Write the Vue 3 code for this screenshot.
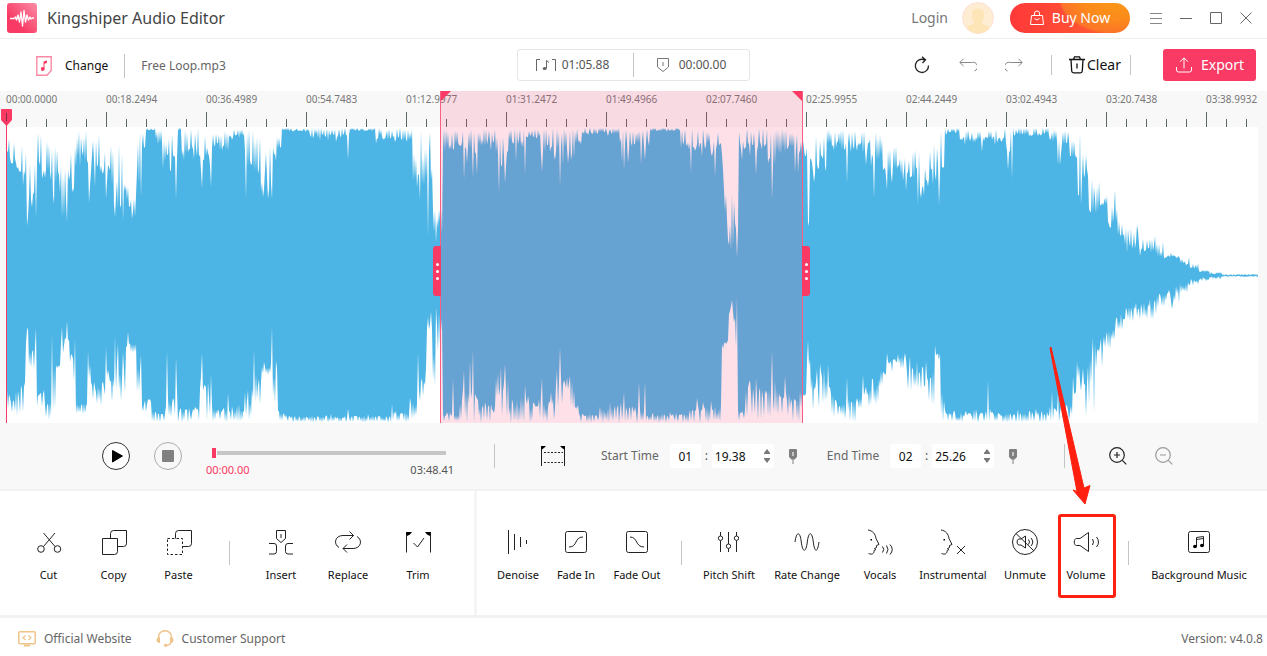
<script setup>
import { ref } from 'vue'

const SPAN = 1252
const HALF_TOP = 127
const pct = (px) => (px / SPAN) * 100 + '%'

const labels = [
  '00:00.0000', '00:18.2494', '00:36.4989', '00:54.7483', '01:12.9977', '01:31.2472', '01:49.4966',
  '02:07.7460', '02:25.9955', '02:44.2449', '03:02.4943', '03:20.7438', '03:38.9932',
]
const ticks = Array.from({ length: 63 }, (_, i) => ({ at: pct(i * 20), major: i % 5 === 0 }))
const selection = { left: pct(434), width: pct(363) }

// Loudness bands: [start, outer edge, inner edge]
const upperBands = [
  [6, 133, 165], [12, 138, 170], [18, 142, 184], [26, 155, 212], [37, 134, 175], [45, 140, 170], [52, 150, 196],
  [56, 148, 184], [61, 168, 208], [68, 148, 186], [76, 132, 166], [90, 134, 172], [100, 152, 174], [108, 145, 180],
  [114, 175, 208], [119, 145, 206], [126, 186, 210], [132, 196, 216], [137, 140, 182], [140, 130, 152], [146, 128, 131],
  [156, 130, 144], [163, 140, 162], [172, 130, 158], [178, 128, 130], [182, 130, 155], [198, 130, 160], [212, 132, 150],
  [230, 130, 138], [244, 130, 165], [254, 132, 178], [266, 145, 188], [274, 138, 165], [278, 138, 148], [282, 128, 131],
  [310, 128, 138], [350, 128, 131], [376, 128, 140], [404, 130, 144], [413, 155, 188], [425, 150, 180], [432, 170, 224],
  [438, 205, 232], [443, 130, 150], [460, 130, 152], [480, 130, 145], [495, 132, 165], [510, 130, 145], [525, 130, 138],
  [540, 130, 155], [575, 130, 145], [583, 128, 134], [620, 130, 145], [650, 128, 131], [680, 130, 150], [722, 150, 180],
  [724, 190, 218], [728, 196, 242], [736, 215, 240], [739, 129, 150], [767, 130, 165], [776, 130, 155], [800, 140, 156],
  [806, 130, 150], [808, 180, 220], [810, 130, 180], [815, 134, 172], [827, 130, 150], [845, 130, 152], [870, 135, 168],
  [886, 146, 175], [900, 158, 175], [910, 150, 178], [920, 165, 188], [930, 145, 180], [940, 135, 175], [945, 128, 133],
  [960, 130, 142], [1005, 130, 152], [1014, 128, 136], [1050, 130, 142], [1058, 135, 165], [1062, 132, 145],
  [1070, 140, 160], [1077, 160, 200], [1082, 156, 178], [1089, 182, 212], [1100, 196, 206], [1108, 208, 226],
  [1118, 222, 236], [1125, 229, 246], [1132, 230, 248], [1140, 240, 252], [1154, 244, 256], [1165, 252, 258],
  [1180, 258, 264], [1190, 264, 269], [1200, 270, 272], [1210, 272, 274], [1222, 274, 275],
]
const upperNotches = [
  [28, 216], [32, 207], [36, 218], [54, 204], [62, 218], [67, 222], [89, 203], [106, 199], [115, 217], [118, 208],
  [123, 221], [132, 219], [141, 198], [176, 199], [202, 188], [211, 187], [246, 199], [263, 197], [268, 199],
  [272, 199], [348, 160], [421, 130], [428, 237], [430, 132], [436, 243], [442, 235], [464, 180], [467, 163],
  [473, 178], [477, 175], [499, 193], [505, 183], [516, 162], [525, 175], [542, 172], [555, 160], [560, 187],
  [563, 165], [571, 160], [622, 162], [624, 170], [628, 163], [641, 165], [645, 160], [691, 174], [712, 156],
  [715, 177], [727, 220], [729, 245], [733, 247], [737, 258], [742, 160], [756, 175], [770, 158], [772, 200],
  [795, 173], [798, 173], [808, 226], [847, 183], [866, 165], [874, 198], [887, 190], [906, 191], [918, 205],
  [921, 198], [939, 205], [982, 152], [1008, 170], [1012, 179], [1060, 165], [1078, 196], [1080, 132], [1081, 205],
  [1096, 213], [1110, 228], [1115, 190], [1137, 225], [1155, 236], [1163, 242],
]
const lowerBands = [
  [6, 408, 388], [10, 411, 398], [16, 418, 392], [20, 418, 385], [26, 344, 328], [29, 370, 346], [37, 406, 390],
  [45, 418, 400], [52, 408, 365], [60, 370, 342], [66, 350, 338], [70, 385, 350], [76, 415, 402], [88, 382, 352],
  [92, 402, 385], [100, 412, 382], [106, 402, 370], [114, 390, 345], [120, 400, 362], [126, 352, 344],
  [137, 390, 365], [142, 412, 400], [152, 422, 412], [166, 420, 395], [178, 422, 408], [200, 418, 385],
  [212, 422, 408], [230, 422, 405], [245, 420, 390], [252, 402, 378], [262, 375, 362], [272, 402, 365],
  [278, 420, 412], [285, 422, 416], [390, 422, 411], [410, 420, 395], [420, 400, 375], [426, 370, 325],
  [432, 385, 335], [438, 350, 320], [443, 422, 412], [460, 422, 390], [480, 422, 406], [496, 418, 380],
  [510, 422, 398], [530, 422, 400], [556, 406, 378], [575, 415, 405], [580, 422, 414], [600, 422, 406],
  [646, 422, 414], [690, 422, 406], [722, 350, 342], [728, 345, 308], [738, 420, 410], [746, 418, 388],
  [772, 416, 390], [790, 420, 400], [800, 408, 390], [806, 400, 350], [812, 410, 376], [820, 406, 370],
  [828, 412, 388], [834, 416, 404], [845, 422, 402], [862, 412, 385], [870, 405, 380], [880, 385, 370],
  [886, 374, 358], [900, 368, 355], [907, 390, 365], [918, 388, 366], [925, 404, 372], [935, 360, 354],
  [941, 420, 390], [945, 422, 413], [990, 422, 412], [1050, 422, 406], [1072, 420, 378], [1082, 412, 370],
  [1090, 384, 348], [1096, 368, 342], [1104, 348, 335], [1115, 330, 318], [1125, 320, 307], [1135, 318, 303],
  [1150, 318, 298], [1157, 306, 294], [1165, 302, 290], [1180, 292, 284], [1190, 285, 280], [1200, 281, 278],
  [1210, 279, 277], [1222, 277, 276],
]
const lowerNotches = [
  [27, 330], [36, 328], [52, 334], [62, 327], [67, 321], [88, 351], [106, 347], [115, 336], [123, 352], [128, 332],
  [141, 355], [167, 351], [176, 357], [202, 353], [211, 374], [228, 393], [254, 349], [272, 327], [276, 361],
  [348, 409], [392, 404], [418, 353], [428, 317], [436, 307], [442, 318], [453, 378], [464, 370], [470, 360],
  [473, 349], [498, 373], [505, 364], [525, 385], [542, 378], [556, 385], [560, 347], [564, 380], [624, 392],
  [639, 382], [645, 382], [697, 398], [725, 342], [732, 300], [737, 296], [750, 380], [756, 378], [772, 350],
  [785, 376], [808, 340], [820, 364], [828, 364], [847, 377], [887, 353], [905, 353], [935, 345], [988, 380],
  [1052, 391], [1058, 392], [1077, 361], [1083, 368], [1093, 338], [1094, 414], [1102, 367], [1172, 309],
]

function random(seed) {
  let s = seed
  return () => {
    s = (s * 1664525 + 1013904223) % 4294967296
    return s / 4294967296
  }
}

function trace(bands, notches, seed) {
  const rnd = random(seed)
  const ys = []
  let b = 0
  let sincePeak = 0
  for (let x = 6; x <= 1258; x++) {
    while (b + 1 < bands.length && bands[b + 1][0] <= x) b++
    const [, outer, inner] = bands[b]
    const peak = sincePeak > 0 && rnd() < 0.45
    sincePeak = peak ? 0 : sincePeak + 1
    const deep = rnd() < 0.12 ? 0.35 : 0
    const r = peak ? rnd() * 0.3 - 0.1 : 0.55 + rnd() * 0.5 + deep
    const y = outer + (inner - outer) * r
    ys.push(Math.min(423, Math.max(128, y)))
  }
  for (const [x, y] of notches) ys[x - 6] = y
  return ys.map((y, i) => `${i} ${(y - HALF_TOP).toFixed(1)}`)
}

const wavePath =
  'M' + trace(upperBands, upperNotches, 7).join('L') +
  'L' + trace(lowerBands, lowerNotches, 29).reverse().join('L') + 'Z'

const face = 'M2 2C6.500 2.500 9.500 6 10 10.500L13 16.500L10.500 17.500V19.500L8.500 20.500L10 21.500L8 22.500C8.500 25.500 6 27 2.500 25.500'
const eye = 'M4.500 11h1.500v1.500h-1.500z'

const editTools = [
  { name: 'Cut', lines: ['M8.500 5L20 18.500M20 5L8.500 18.500', 'M9.300 21a3.300 3.300 0 1 1-6.600 0a3.300 3.300 0 1 1 6.600 0M25.800 21a3.300 3.300 0 1 1-6.600 0a3.300 3.300 0 1 1 6.600 0'] },
  { name: 'Copy', lines: ['M2.500 10.500H17.500V23.500a3 3 0 0 1-3 3H2.500Z', 'M10.500 10.500V5.500a3 3 0 0 1 3-3H26.500V15.500a3 3 0 0 1-3 3H17.500'] },
  { name: 'Paste', dashed: ['M2.500 10.500H17.500V26.500H2.500Z'], lines: ['M10.500 10.500V5.500a3 3 0 0 1 3-3H26.500V15.500a3 3 0 0 1-3 3H17.500'] },
  { divider: true, name: 'edit-divider' },
  { name: 'Insert', lines: ['M9.500 2.500H18.500V10.500L14 14.500L9.500 10.500Z', 'M14 6v4', 'M2 15.500H7a2.500 2.500 0 0 1 2.500 2.500V23.500a2.500 2.500 0 0 1-2.500 2.500H2M26 15.500H21a2.500 2.500 0 0 0-2.500 2.500V23.500a2.500 2.500 0 0 0 2.500 2.500H26'] },
  { name: 'Replace', lines: ['M5 19.500C-1 16 1 7.500 9 7.500H19.500', 'M15.500 3.500L19.500 7.500L15.500 11.500', 'M23 8.500C29 12 27 20.500 19 20.500H9', 'M13 16.500L9 20.500L13 24.500'] },
  { name: 'Trim', lines: ['M2.500 24.500V4.500M26.500 24.500V4.500', 'M9.500 15L13.500 19L20 10'], solid: ['M2 4H8L6 6.500L3 8ZM27 4H21L23 6.500L26 8Z'] },
]

const effectTools = [
  { name: 'Denoise', lines: ['M4.500 2V26M10.500 6V22M16.500 9V19M22.500 12V16'] },
  { name: 'Fade In', lines: ['M5.500 3.500H22.500a2 2 0 0 1 2 2V22.500a2 2 0 0 1-2 2H5.500a2 2 0 0 1-2-2V5.500a2 2 0 0 1 2-2Z', 'M7 19C16 19 12 9 21 9'] },
  { name: 'Fade Out', lines: ['M5.500 3.500H22.500a2 2 0 0 1 2 2V22.500a2 2 0 0 1-2 2H5.500a2 2 0 0 1-2-2V5.500a2 2 0 0 1 2-2Z', 'M7 9C15 9 12 19 21 19'] },
  { divider: true, name: 'effect-divider' },
  { name: 'Pitch Shift', lines: ['M5.500 4V8M5.500 12.500V24M13.500 4V16M13.500 20.500V24M21.500 4V8M21.500 12.500V24', 'M7.700 10.200a2.200 2.200 0 1 1-4.400 0a2.200 2.200 0 1 1 4.400 0M15.700 18.200a2.200 2.200 0 1 1-4.400 0a2.200 2.200 0 1 1 4.400 0M23.700 10.200a2.200 2.200 0 1 1-4.400 0a2.200 2.200 0 1 1 4.400 0'] },
  { name: 'Rate Change', lines: ['M2 14C3.500 3 7 3 8.300 14S13 25 14.300 14S19 3 20.300 14S24.500 25 26 14'] },
  { name: 'Vocals', lines: [face, 'M16.500 18.500Q19 21.500 16.500 24.500M20.500 17.500Q23.500 21.500 20.500 25.500M24 16.500Q28.500 21.500 24 26.500'], solid: [eye] },
  { name: 'Instrumental', lines: [face, 'M18 18L26 26M26 18L18 26'], solid: [eye] },
  { name: 'Unmute', lines: ['M26.500 14a12.500 12.500 0 1 1-25 0a12.500 12.500 0 1 1 25 0M5 5.500L23 23', 'M14.500 8V20L10 17H8C5.500 17 5.500 11 8 11H10Z', 'M17.500 11.500Q19.500 14 17.500 16.500M20 10Q23.500 14 20 18'] },
  { name: 'Volume', marked: true, lines: ['M16.500 4.500V23.500L8 17.500H4.500C1.500 17.500 1.500 10.500 4.500 10.500H8Z', 'M20.500 11Q22.500 14 20.500 17M24.500 9Q28.500 14 24.500 19'] },
  { divider: true, name: 'music-divider' },
  { name: 'Background Music', lines: ['M5.500 3.500H22.500a2 2 0 0 1 2 2V22.500a2 2 0 0 1-2 2H5.500a2 2 0 0 1-2-2V5.500a2 2 0 0 1 2-2Z', 'M11.500 18.500V9.500L18.500 8.500V17.500M11.500 11.500L18.500 10.500'], solid: ['M12 18.500a2 1.700 0 1 1-4 0a2 1.700 0 1 1 4 0M19 17.500a2 1.700 0 1 1-4 0a2 1.700 0 1 1 4 0'] },
]
const toolGroups = [
  { id: 'edit', tools: editTools },
  { id: 'effects', tools: effectTools },
]

const ranges = ref([
  { id: 'start', label: 'Start Time', min: '01', sec: '19.38' },
  { id: 'end', label: 'End Time', min: '02', sec: '25.26' },
])
const position = ref(0)
</script>

<template>
  <div class="app">
    <header class="titlebar">
      <svg class="logo" viewBox="0 0 30 30" aria-hidden="true">
        <defs>
          <linearGradient id="logoFill" x1="1" y1="0" x2="0.3" y2="0.7">
            <stop offset="0" stop-color="#fb8ca6" />
            <stop offset="1" stop-color="#f83a64" />
          </linearGradient>
        </defs>
        <rect width="30" height="30" rx="3" fill="url(#logoFill)" />
        <path d="M3 15.500H7L8.500 14L9.500 17L11 12L12.500 19L14 9L15.500 23L17 7.500L18.500 19L20 12L21.500 17L23 14L24 16L25.500 15H27" fill="none" stroke="#fff" stroke-width="1.300" stroke-linejoin="round" />
      </svg>
      <h1>Kingshiper Audio Editor</h1>
      <a class="login" href="#login">Login</a>
      <svg class="avatar" viewBox="0 0 32 32" aria-hidden="true">
        <circle cx="16" cy="16" r="15.500" fill="#feedd3" stroke="#fde0dc" />
        <path d="M10 11c0-6 12-6 12 0v4c0 3-2 4-2.500 6l6 3c2 1 1 3 0 4a15 15 0 0 1-19 0c-1-1-2-3 0-4l6-3c-.5-2-2.500-3-2.500-6z" fill="#fde5b8" />
      </svg>
      <button class="buy">
        <svg width="14" height="16" viewBox="0 0 14 16" fill="none" stroke="#fff" aria-hidden="true">
          <path d="M1.500 5.500H12.500L13.500 14.500H.5ZM4.500 5.500V3a2.500 2 0 0 1 5 0V5.500M4.500 8.500q2.500 3 5 0" />
        </svg>
        Buy Now
      </button>
      <button class="win" aria-label="Menu"><svg viewBox="0 0 14 14"><path d="M1 2.500H13M1 7.500H13M1 12.500H13" stroke="#888" /></svg></button>
      <button class="win" aria-label="Minimize"><svg viewBox="0 0 14 14"><path d="M1 7.500H13" /></svg></button>
      <button class="win" aria-label="Maximize"><svg viewBox="0 0 14 14"><path d="M1.500 1.500H12.500V12.500H1.500Z" /></svg></button>
      <button class="win" aria-label="Close"><svg viewBox="0 0 14 14"><path d="M1.500 1.500L12.500 12.500M12.500 1.500L1.500 12.500" /></svg></button>
    </header>

    <div class="toolbar">
      <div class="file">
        <button class="change">
          <svg width="16" height="20" viewBox="0 0 16 20" aria-hidden="true">
            <path d="M.8 .8H15.200V14.500L11 19.200H.8Z" fill="none" stroke="#fa8aa4" stroke-width="1.400" />
            <path d="M7.500 13V5.500L11 4.500V7L8.500 7.700V13Z" fill="#f83a64" />
            <circle cx="6.700" cy="13" r="1.900" fill="#f83a64" />
          </svg>
          Change
        </button>
        <i class="rule"></i>
        <span class="filename">Free Loop.mp3</span>
      </div>
      <div class="times">
        <span class="readout">
          <svg width="22" height="14" viewBox="0 0 22 14" fill="none" stroke="#666" aria-hidden="true">
            <path d="M1.500 13V1.500H5M20.500 13V1.500H17" />
            <path d="M11.500 10V2.500L14 4.500" />
            <ellipse cx="9.700" cy="10.500" rx="2" ry="1.500" fill="#666" stroke="none" />
          </svg>
          01:05.88
        </span>
        <i class="rule"></i>
        <span class="readout marker">
          <svg width="12" height="14" viewBox="0 0 12 14" fill="none" stroke="#777" aria-hidden="true">
            <path d="M.5 .5H11.500V9L6 13.500L.5 9ZM6 4V8" />
          </svg>
          00:00.00
        </span>
      </div>
      <div class="actions">
        <button class="icon" aria-label="Reset">
          <svg width="16" height="18" viewBox="0 0 16 18" fill="none" stroke="#222" stroke-width="1.300"><path d="M10.500 3.800A6.600 6.600 0 1 0 14.500 9.500M8 .8L11.500 3.800L8.500 7" /></svg>
        </button>
        <button class="icon" aria-label="Undo">
          <svg width="18" height="14" viewBox="0 0 18 14" fill="none" stroke="#888"><path d="M1 4.500H12.500a4.500 4.500 0 0 1 3 8.500M4.500 .8L.8 4.500L4.500 8" /></svg>
        </button>
        <button class="icon" aria-label="Redo">
          <svg width="18" height="14" viewBox="0 0 18 14" fill="none" stroke="#888"><path d="M17 4.500H5.500a4.500 4.500 0 0 0-3 8.500M13.500 .8L17.200 4.500L13.500 8" /></svg>
        </button>
        <i class="rule"></i>
        <button class="clear">
          <svg width="16" height="18" viewBox="0 0 16 18" fill="none" stroke="#111" stroke-width="1.300" aria-hidden="true"><path d="M0 3.500H16M4.500 3.500L5.500 .8H10.500L11.500 3.500M2 3.500L2.700 15a2 2 0 0 0 2 1.800H11.300a2 2 0 0 0 2-1.800L14 3.500M8 7.500V12.500" /></svg>
          Clear
        </button>
        <i class="rule"></i>
        <button class="export">
          <svg width="18" height="16" viewBox="0 0 18 16" fill="none" stroke="#fff" aria-hidden="true"><path d="M1.500 10V13a2 2 0 0 0 2 2H14.500a2 2 0 0 0 2-2V10M9 11.500V1M5 4.800L9 .8L13 4.800" /></svg>
          Export
        </button>
      </div>
    </div>

    <main class="timeline">
      <div class="track">
        <div class="ruler">
          <span v-for="(t, i) in labels" :key="t" class="stamp" :style="{ left: pct(i * 100) }">{{ t }}</span>
          <i v-for="t in ticks" :key="t.at" class="tick" :class="{ major: t.major }" :style="{ left: t.at }"></i>
        </div>
        <svg class="wave" viewBox="0 0 1252 296" preserveAspectRatio="none" role="img" aria-label="Waveform">
          <path :d="wavePath" fill="#4cb5e5" />
        </svg>
        <div class="selection" :style="selection">
          <i class="flag from"></i>
          <i class="flag to"></i>
          <button class="handle from" aria-label="Selection start"><i></i><i></i><i></i></button>
          <button class="handle to" aria-label="Selection end"><i></i><i></i><i></i></button>
        </div>
        <div class="playhead">
          <svg width="11" height="17" viewBox="0 0 11 17"><path d="M1 0H10a1 1 0 0 1 1 1V11L5.500 17L0 11V1a1 1 0 0 1 1-1Z" fill="#f83a64" /><path d="M5.500 4V12" stroke="#7a3145" /></svg>
        </div>
      </div>
    </main>

    <section class="transport">
      <div class="player">
        <button class="round" aria-label="Play"><svg viewBox="0 0 28 28"><circle cx="14" cy="14" r="13.500" fill="#fff" stroke="#333" /><path d="M10.500 8.500L20.500 14L10.500 20Z" fill="#000" stroke="#000" stroke-linejoin="round" /></svg></button>
        <button class="round" aria-label="Stop"><svg viewBox="0 0 28 28"><circle cx="14" cy="14" r="13.500" fill="none" stroke="#aaa" /><rect x="8" y="8" width="12" height="12" rx="1" fill="#808080" /></svg></button>
        <div class="seek">
          <input v-model="position" type="range" min="0" max="228" aria-label="Playback position" />
          <div class="seek-times"><span class="now">00:00.00</span><span>03:48.41</span></div>
        </div>
      </div>
      <i class="rule"></i>
      <div class="range">
        <button class="icon crop" aria-label="Select range">
          <svg width="24" height="20" viewBox="0 0 24 20" fill="none" stroke="#222"><path d="M.5 20V1M23.500 20V1" /><path d="M3 6.500H22M3 16.500H22" stroke-dasharray="2 1.500" /><path d="M0 0H5L3 2L0 4ZM24 0H19L21 2L24 4Z" fill="#000" stroke="none" /></svg>
        </button>
        <div v-for="r in ranges" :key="r.id" class="bound">
          <label :for="r.id + '-min'">{{ r.label }}</label>
          <input :id="r.id + '-min'" v-model="r.min" class="min" type="text" />
          <span class="colon">:</span>
          <span class="sec">
            <input v-model="r.sec" type="text" :aria-label="r.label + ' seconds'" />
            <span class="steps">
              <button aria-label="Increase"><svg width="6" height="5" viewBox="0 0 6 5"><path d="M3 0L6 4V5H0V4Z" /></svg></button>
              <button aria-label="Decrease"><svg width="6" height="5" viewBox="0 0 6 5"><path d="M3 5L6 1V0H0V1Z" /></svg></button>
            </span>
          </span>
          <button class="icon pin" aria-label="Use marker position">
            <svg width="8" height="15" viewBox="0 0 8 15"><path d="M1 0H7a1 1 0 0 1 1 1V8L5.500 10.500H4.500V15H3.500V10.500H2.500L0 8V1a1 1 0 0 1 1-1Z" fill="#808080" /><path d="M4 3V7" stroke="#ddd" stroke-width="1.500" /></svg>
          </button>
        </div>
      </div>
      <i class="rule"></i>
      <div class="zoom">
        <button class="icon" aria-label="Zoom in"><svg width="18" height="18" viewBox="0 0 18 18" fill="none" stroke="#222" stroke-width="1.200"><circle cx="8" cy="8" r="7.300" /><path d="M13.300 13.300L17.300 17.300M5 8H11M8 5V11" /></svg></button>
        <button class="icon" aria-label="Zoom out"><svg width="18" height="18" viewBox="0 0 18 18" fill="none" stroke="#999" stroke-width="1.200"><circle cx="8" cy="8" r="7.300" /><path d="M13.300 13.300L17.300 17.300M5 8H11" /></svg></button>
      </div>
    </section>

    <section class="tools">
      <div v-for="g in toolGroups" :key="g.id" class="group" :class="g.id">
        <template v-for="t in g.tools" :key="t.name">
          <i v-if="t.divider" class="rule"></i>
          <div v-else class="cell">
            <button class="tool">
              <svg width="28" height="28" viewBox="0 0 28 28" fill="none" stroke="#222" aria-hidden="true">
                <path v-for="d in t.lines" :key="d" :d="d" />
                <path v-for="d in t.dashed" :key="d" :d="d" stroke-dasharray="2.500 2" />
                <path v-for="d in t.solid" :key="d" :d="d" fill="#000" stroke="none" />
              </svg>
              <span>{{ t.name }}</span>
            </button>
            <div v-if="t.marked" class="callout">
              <svg width="42" height="158" viewBox="0 0 42 158" aria-hidden="true">
                <path d="M2 0L35 141L41 138.500L36 157L24 143L28 144.500L1 1Z" fill="#ff2010" stroke="#ff2010" />
              </svg>
            </div>
          </div>
        </template>
      </div>
    </section>

    <footer class="footer">
      <a href="#website">
        <svg width="18" height="16" viewBox="0 0 18 16" fill="none" stroke="#efc48b" stroke-width="1.500" aria-hidden="true"><rect x=".8" y=".8" width="16.400" height="12" rx="1" /><path d="M7.500 4.500L5 6.800L7.500 9M10.500 4.500L13 6.800L10.500 9" stroke-width="1.200" /><path d="M6 14.500H12" stroke-width="2" /></svg>
        Official Website
      </a>
      <a href="#support">
        <svg width="18" height="17" viewBox="0 0 18 17" fill="none" stroke="#efc48b" stroke-width="1.500" aria-hidden="true"><path d="M2.500 9V7a6.500 6.300 0 0 1 13 0V9M15.500 12Q14 15 10 15.500" /><path d="M4 7V13Q.5 12.500 .5 10T4 7ZM14 7V13Q17.500 12.500 17.500 10T14 7Z" fill="#efc48b" stroke="none" /><circle cx="9.500" cy="15.300" r="1.600" fill="#efc48b" stroke="none" /></svg>
        Customer Support
      </a>
      <span class="version">Version: v4.0.8</span>
    </footer>
  </div>
</template>

<style>
body {
  margin: 0;
}
</style>

<style scoped>
.app {
  display: flex;
  flex-direction: column;
  min-height: 100vh;
  background: #fff;
  color: #555;
  font: 12px/16px "Noto Sans", "Open Sans", sans-serif;
}
.app * {
  box-sizing: border-box;
}
button {
  display: flex;
  align-items: center;
  justify-content: center;
  padding: 0;
  border: 0;
  background: none;
  color: inherit;
  font: inherit;
  white-space: nowrap;
  cursor: pointer;
}
a {
  color: inherit;
  text-decoration: none;
}
svg {
  flex: none;
}
.rule {
  flex: none;
  width: 1px;
  height: 24px;
  background: #c4c4c4;
}

.titlebar {
  display: flex;
  align-items: center;
  height: 39px;
  padding: 0 6px 2px 7px;
  border-bottom: 1px solid #eee;
}
.logo {
  width: 30px;
  height: 30px;
}
h1 {
  flex: 1;
  margin: 0 0 0 10px;
  color: #444;
  font-size: 16px;
  font-weight: 400;
}
.login {
  color: #777;
  font-size: 14px;
}
.avatar {
  width: 32px;
  height: 32px;
  margin: 0 16px 0 14px;
}
.buy {
  gap: 8px;
  width: 120px;
  height: 30px;
  margin-right: 11px;
  border-radius: 15px;
  background: radial-gradient(ellipse 60px 38px at 90% -20%, #fa9a14, #fb8a1c 60%, #fc7428 95%, transparent), linear-gradient(90deg, #ff3838, #ff6434);
  color: #fff;
  font-size: 14px;
}
.win {
  width: 30px;
  height: 30px;
}
.win svg {
  width: 14px;
  height: 14px;
  fill: none;
  stroke: #666;
}

.toolbar {
  display: grid;
  grid-template-columns: 1fr auto 1fr;
  align-items: center;
  height: 52px;
  padding: 0 11px 0 36px;
}
.file,
.actions {
  display: flex;
  align-items: center;
}
.file {
  padding-top: 1px;
}
.change {
  gap: 13px;
  color: #111;
}
.file .rule {
  margin: 0 16px;
}
.filename {
  color: #666;
}
.times {
  display: flex;
  align-items: center;
  height: 32px;
  margin-right: 25px;
  border: 1px solid #e6e6e6;
  border-radius: 3px;
}
.readout {
  display: flex;
  align-items: center;
  justify-content: center;
  gap: 5px;
  width: 115px;
  padding-right: 7px;
}
.readout.marker {
  gap: 10px;
  padding: 0;
}
.actions {
  justify-content: flex-end;
}
.icon {
  width: 24px;
  height: 24px;
}
.actions .icon {
  margin-right: 22px;
}
.actions .icon + .rule {
  margin-left: 3px;
}
.actions .rule {
  height: 20px;
}
.clear {
  gap: 2px;
  margin: 0 9px 0 17px;
  color: #111;
  font-size: 14px;
}
.export {
  gap: 8px;
  width: 93px;
  height: 32px;
  margin-left: 32px;
  border-radius: 3px;
  background: #f83a64;
  color: #fff;
  font-size: 14px;
}

.timeline {
  display: flex;
  flex: 1;
  padding: 0 9px 0 6px;
  background: #f8f8f8;
}
.track {
  position: relative;
  display: flex;
  flex: 1;
  flex-direction: column;
}
.ruler {
  position: relative;
  height: 36px;
}
.stamp {
  position: absolute;
  top: 0;
  color: #777;
  font-size: 10px;
}
.tick {
  position: absolute;
  bottom: 0;
  width: 1px;
  height: 8px;
  background: #5d6666;
}
.tick.major {
  height: 15px;
}
.wave {
  display: block;
  flex: 1;
  width: 100%;
  min-height: 200px;
  background: #fff;
}
.selection {
  position: absolute;
  top: 0;
  bottom: 0;
  border: solid #fa5e82;
  border-width: 0 1px;
  background: rgba(245, 60, 110, 0.16);
}
.flag {
  position: absolute;
  top: 0;
  width: 10px;
  height: 10px;
  background: #f83a64;
}
.flag.from {
  left: 0;
  clip-path: polygon(0 0, 100% 0, 0 100%);
}
.flag.to {
  right: 0;
  clip-path: polygon(0 0, 100% 0, 100% 100%);
}
.handle {
  position: absolute;
  top: 155px;
  flex-direction: column;
  gap: 4px;
  width: 8px;
  height: 50px;
  background: #f83a64;
}
.handle i {
  width: 3px;
  height: 3px;
  border-radius: 50%;
  background: #fff;
}
.handle.from {
  right: 100%;
  border-radius: 3px 0 0 3px;
}
.handle.to {
  left: 100%;
  border-radius: 0 3px 3px 0;
}
.playhead {
  position: absolute;
  top: 18px;
  bottom: 0;
  left: 0;
  width: 1px;
  background: #f83a64;
}
.playhead svg {
  position: absolute;
  top: 0;
  left: -5px;
}

.transport {
  display: flex;
  align-items: center;
  height: 68px;
  padding: 0 91px 0 102px;
  border-bottom: 2px solid #f2f2f2;
  background: #f8f8f8;
}
.player {
  display: flex;
  align-items: center;
}
.round {
  width: 28px;
  height: 28px;
  margin-right: 24px;
}
.round svg {
  width: 28px;
  height: 28px;
}
.seek {
  width: 248px;
  padding-top: 14px;
}
.seek input {
  display: block;
  width: 234px;
  height: 10px;
  margin: 0 0 4px 6px;
  appearance: none;
  background: linear-gradient(#c6c6c6, #c6c6c6) center / 100% 4px no-repeat;
}
.seek input::-webkit-slider-thumb {
  width: 5px;
  height: 10px;
  appearance: none;
  border-right: 1px solid #f8f8f8;
  background: #f83a64;
}
.seek-times {
  display: flex;
  justify-content: space-between;
  font-size: 11px;
}
.seek-times .now {
  color: #f83a64;
}
.player + .rule {
  margin: 0 46px 0 40px;
}
.range {
  display: flex;
  flex: 1;
  align-items: center;
}
.crop {
  margin-right: 36px;
}
.bound {
  display: flex;
  align-items: center;
  margin-right: 22px;
}
.bound label {
  margin-right: 11px;
  color: #666;
  white-space: nowrap;
}
.bound input {
  height: 24px;
  padding: 0;
  border: 0;
  border-radius: 3px;
  background: #fff;
  color: #111;
  font: inherit;
}
.bound .min {
  width: 31px;
  text-align: center;
}
.colon {
  width: 11px;
  text-align: center;
}
.sec {
  display: flex;
  align-items: center;
  width: 62px;
  border-radius: 3px;
  background: #fff;
}
.sec input {
  width: 52px;
  padding-left: 3px;
}
.steps {
  display: flex;
  flex-direction: column;
  gap: 4px;
}
.steps svg {
  fill: #777;
}
.pin {
  margin-left: 7px;
}
.zoom {
  display: flex;
  gap: 22px;
  margin-left: 41px;
}

.tools {
  display: grid;
  grid-template-columns: 474fr 793fr;
  height: 127px;
  border-bottom: 3px solid #f2f2f2;
}
.group {
  display: grid;
  align-items: center;
  justify-items: center;
}
.group.edit {
  grid-template-columns: 65fr 65fr 65fr 36fr 68fr 66fr 74fr;
  padding: 0 19px 0 16px;
}
.group.effects {
  grid-template-columns: 58fr 58fr 64fr 24fr 72fr 84fr 62fr 84fr 60fr 62fr 22fr 120fr;
  padding: 0 8px 0 12px;
  border-left: 3px solid #f5f5f5;
}
.cell {
  position: relative;
  display: flex;
  justify-content: center;
  width: 100%;
  min-width: 0;
  padding-top: 5px;
}
.tool {
  flex-direction: column;
  gap: 11px;
  color: #111;
  font-size: 11px;
}
.callout {
  position: absolute;
  top: -9px;
  left: 50%;
  width: 58px;
  height: 84px;
  margin-left: -28px;
  border: 3px solid #ff2010;
  border-radius: 3px;
  pointer-events: none;
}
.callout svg {
  position: absolute;
  bottom: 90px;
  left: -12px;
}

.footer {
  display: flex;
  gap: 24px;
  align-items: center;
  height: 38px;
  padding: 3px 4px 0 18px;
  color: #666;
}
.footer a {
  display: flex;
  gap: 8px;
  align-items: center;
}
.version {
  margin-left: auto;
}
</style>
